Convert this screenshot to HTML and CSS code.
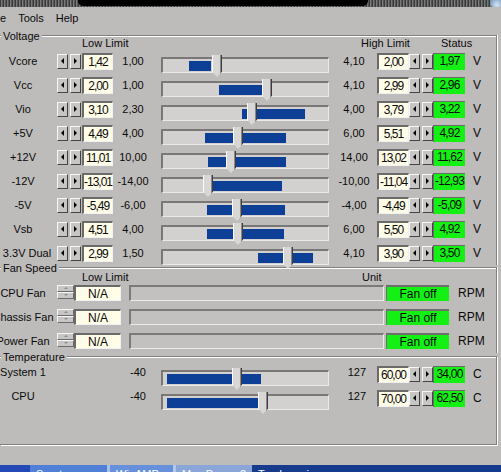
FILE: index.html
```html
<!DOCTYPE html>
<html lang="en">
<head>
  <meta charset="UTF-8" />
  <title>Hardware Monitor</title>
  <link rel="stylesheet" href="styles.css">
</head>
<body>
<div class="window">

  <div class="skin-top">
    <div class="skin-screen"></div>
    <span class="skin-knob"></span>
  </div>

  <div class="menubar">
    <span>e</span>
    <span>Tools</span>
    <span>Help</span>
  </div>

  <section class="group group-voltage">
    <div class="group-title">Voltage</div>
    <div class="vhead">
      <span>Low Limit</span>
      <span>High Limit</span>
      <span>Status</span>
    </div>

    <div class="vrow">
      <span class="name">Vcore</span>
      <span class="spin"><span class="arr arr-l"></span><span class="arr arr-r"></span></span>
      <span class="field">1,42</span>
      <span class="num">1,00</span>
      <div class="track"><div class="range" style="margin-left:26px;width:22px"></div><div class="thumb" style="left:49px"></div></div>
      <span class="num">4,10</span>
      <span class="field field-high">2,00</span>
      <span class="spin"><span class="arr arr-l"></span><span class="arr arr-r"></span></span>
      <span class="status">1,97</span>
      <span class="unit">V</span>
    </div>

    <div class="vrow">
      <span class="name">Vcc</span>
      <span class="spin"><span class="arr arr-l"></span><span class="arr arr-r"></span></span>
      <span class="field">2,00</span>
      <span class="num">1,00</span>
      <div class="track"><div class="range" style="margin-left:56px;width:43px"></div><div class="thumb" style="left:99px"></div></div>
      <span class="num">4,10</span>
      <span class="field field-high">2,99</span>
      <span class="spin"><span class="arr arr-l"></span><span class="arr arr-r"></span></span>
      <span class="status">2,96</span>
      <span class="unit">V</span>
    </div>

    <div class="vrow">
      <span class="name">Vio</span>
      <span class="spin"><span class="arr arr-l"></span><span class="arr arr-r"></span></span>
      <span class="field">3,10</span>
      <span class="num">2,30</span>
      <div class="track"><div class="range" style="margin-left:79px;width:63px"></div><div class="thumb" style="left:84px"></div></div>
      <span class="num">4,00</span>
      <span class="field field-high">3,79</span>
      <span class="spin"><span class="arr arr-l"></span><span class="arr arr-r"></span></span>
      <span class="status">3,22</span>
      <span class="unit">V</span>
    </div>

    <div class="vrow">
      <span class="name">+5V</span>
      <span class="spin"><span class="arr arr-l"></span><span class="arr arr-r"></span></span>
      <span class="field">4,49</span>
      <span class="num">4,00</span>
      <div class="track"><div class="range" style="margin-left:42px;width:81px"></div><div class="thumb" style="left:70px"></div></div>
      <span class="num">6,00</span>
      <span class="field field-high">5,51</span>
      <span class="spin"><span class="arr arr-l"></span><span class="arr arr-r"></span></span>
      <span class="status">4,92</span>
      <span class="unit">V</span>
    </div>

    <div class="vrow">
      <span class="name">+12V</span>
      <span class="spin"><span class="arr arr-l"></span><span class="arr arr-r"></span></span>
      <span class="field">11,01</span>
      <span class="num">10,00</span>
      <div class="track"><div class="range" style="margin-left:45px;width:78px"></div><div class="thumb" style="left:63px"></div></div>
      <span class="num">14,00</span>
      <span class="field field-high">13,02</span>
      <span class="spin"><span class="arr arr-l"></span><span class="arr arr-r"></span></span>
      <span class="status">11,62</span>
      <span class="unit">V</span>
    </div>

    <div class="vrow">
      <span class="name">-12V</span>
      <span class="spin"><span class="arr arr-l"></span><span class="arr arr-r"></span></span>
      <span class="field">-13,01</span>
      <span class="num">-14,00</span>
      <div class="track"><div class="range" style="margin-left:50px;width:69px"></div><div class="thumb" style="left:40px"></div></div>
      <span class="num">-10,00</span>
      <span class="field field-high">-11,04</span>
      <span class="spin"><span class="arr arr-l"></span><span class="arr arr-r"></span></span>
      <span class="status">-12,93</span>
      <span class="unit">V</span>
    </div>

    <div class="vrow">
      <span class="name">-5V</span>
      <span class="spin"><span class="arr arr-l"></span><span class="arr arr-r"></span></span>
      <span class="field">-5,49</span>
      <span class="num">-6,00</span>
      <div class="track"><div class="range" style="margin-left:44px;width:78px"></div><div class="thumb" style="left:69px"></div></div>
      <span class="num">-4,00</span>
      <span class="field field-high">-4,49</span>
      <span class="spin"><span class="arr arr-l"></span><span class="arr arr-r"></span></span>
      <span class="status">-5,09</span>
      <span class="unit">V</span>
    </div>

    <div class="vrow">
      <span class="name">Vsb</span>
      <span class="spin"><span class="arr arr-l"></span><span class="arr arr-r"></span></span>
      <span class="field">4,51</span>
      <span class="num">4,00</span>
      <div class="track"><div class="range" style="margin-left:44px;width:77px"></div><div class="thumb" style="left:70px"></div></div>
      <span class="num">6,00</span>
      <span class="field field-high">5,50</span>
      <span class="spin"><span class="arr arr-l"></span><span class="arr arr-r"></span></span>
      <span class="status">4,92</span>
      <span class="unit">V</span>
    </div>

    <div class="vrow">
      <span class="name name-wide">3.3V Dual</span>
      <span class="spin"><span class="arr arr-l"></span><span class="arr arr-r"></span></span>
      <span class="field">2,99</span>
      <span class="num">1,50</span>
      <div class="track"><div class="range" style="margin-left:95px;width:55px"></div><div class="thumb" style="left:120px"></div></div>
      <span class="num">4,10</span>
      <span class="field field-high">3,90</span>
      <span class="spin"><span class="arr arr-l"></span><span class="arr arr-r"></span></span>
      <span class="status">3,50</span>
      <span class="unit">V</span>
    </div>
  </section>

  <section class="group group-fan">
    <div class="group-title">Fan Speed</div>
    <div class="fhead">
      <span>Low Limit</span>
      <span>Unit</span>
    </div>

    <div class="frow">
      <span class="name">CPU Fan</span>
      <span class="vspin"><span class="varr varr-up"></span><span class="varr varr-down"></span></span>
      <span class="field field-na">N/A</span>
      <span class="fanbar"></span>
      <span class="fanstat">Fan off</span>
      <span class="unit-rpm">RPM</span>
    </div>

    <div class="frow">
      <span class="name">Chassis Fan</span>
      <span class="vspin"><span class="varr varr-up"></span><span class="varr varr-down"></span></span>
      <span class="field field-na">N/A</span>
      <span class="fanbar"></span>
      <span class="fanstat">Fan off</span>
      <span class="unit-rpm">RPM</span>
    </div>

    <div class="frow">
      <span class="name">Power Fan</span>
      <span class="vspin"><span class="varr varr-up"></span><span class="varr varr-down"></span></span>
      <span class="field field-na">N/A</span>
      <span class="fanbar"></span>
      <span class="fanstat">Fan off</span>
      <span class="unit-rpm">RPM</span>
    </div>
  </section>

  <section class="group group-temp">
    <div class="group-title">Temperature</div>

    <div class="vrow trow">
      <span class="name">System 1</span>
      <span></span>
      <span></span>
      <span class="num num-r">-40</span>
      <div class="track"><div class="range" style="margin-left:4px;width:94px"></div><div class="thumb" style="left:69px"></div></div>
      <span class="num num-r">127</span>
      <span class="field field-high">60,00</span>
      <span class="spin"><span class="arr arr-l"></span><span class="arr arr-r"></span></span>
      <span class="status">34,00</span>
      <span class="unit">C</span>
    </div>

    <div class="vrow trow">
      <span class="name">CPU</span>
      <span></span>
      <span></span>
      <span class="num num-r">-40</span>
      <div class="track"><div class="range" style="margin-left:4px;width:95px"></div><div class="thumb" style="left:95px"></div></div>
      <span class="num num-r">127</span>
      <span class="field field-high">70,00</span>
      <span class="spin"><span class="arr arr-l"></span><span class="arr arr-r"></span></span>
      <span class="status">62,50</span>
      <span class="unit">C</span>
    </div>
  </section>

  <div class="taskbar">
    <span class="task task-start"></span>
    <span class="task task-a">Sportcup.ro</span>
    <span class="task task-b">WinAMP</span>
    <span class="task task-c">Max Payne 2</span>
    <span class="task task-active">Trackmania</span>
  </div>

</div>
</body>
</html>
```

FILE: styles.css
```css
:root {
  --face: #bebcba;
  --shade: #82807e;
  --dark: #6c6a68;
  --light: #f2f2f2;
  --cream: #fffde8;
  --green: #14f014;
  --blue: #0d3f96;
}

body {
  margin: 0;
  width: 501px;
  height: 472px;
  overflow: hidden;
  background: var(--face);
  font-family: "Liberation Sans", Arial, sans-serif;
  font-size: 11px;
  color: #0a0a0a;
}

.window {
  display: flex;
  flex-direction: column;
  height: 472px;
}

/* skin strip along the top */
.skin-top {
  height: 7px;
  display: flex;
  overflow: hidden;
  background: repeating-linear-gradient(90deg, #3a3a3a 0 1px, #7a7a7a 1px 2px, #575757 2px 3px);
}

.skin-screen {
  margin-left: 78px;
  width: 290px;
  height: 6px;
  background: #000;
  border-radius: 0 0 5px 5px;
}

.skin-knob {
  margin-left: auto;
  margin-top: -5px;
  margin-right: -3px;
  width: 14px;
  height: 14px;
  border-radius: 50%;
  background: radial-gradient(circle at 50% 70%, #d8e6f2, #3f6fa6);
}

/* menu */
.menubar {
  height: 22px;
  display: flex;
  align-items: center;
  gap: 12px;
}

/* group boxes */
.group {
  width: 497px;
  box-sizing: border-box;
  border-top: 1px solid var(--shade);
  border-right: 1px solid var(--shade);
  box-shadow: inset 0 1px #fff, 1px 0 #fff;
}

.group-title {
  width: fit-content;
  margin: -6px 0 0 1px;
  padding: 0 2px;
  line-height: 12px;
  background: var(--face);
}

.group-voltage {
  margin-top: 6px;
}

.group-fan {
  margin-top: 2px;
}

.group-temp {
  margin-top: 3px;
  padding-bottom: 34px;
  border-bottom: 1px solid var(--shade);
  box-shadow: inset 0 1px #fff, 1px 1px #fff;
}

.group-temp .group-title {
  margin-bottom: -1px;
}

/* headers */
.vhead {
  margin-top: -4px;
  height: 11px;
  line-height: 11px;
  padding-left: 82px;
  display: grid;
  grid-template-columns: 279px 80px 1fr;
  white-space: nowrap;
}

.fhead {
  margin-top: -3px;
  height: 10px;
  line-height: 12px;
  padding-left: 82px;
  display: grid;
  grid-template-columns: 280px 1fr;
}

/* voltage / temperature rows */
.vrow {
  display: grid;
  grid-template-columns: 57px 24px 33px 38px 184px 36px 37px 24px 32px 1fr;
  height: 24px;
  align-items: center;
}

.name {
  display: flex;
  justify-content: center;
  padding-right: 11px;
  white-space: nowrap;
}

.name-wide {
  padding: 0 5px 0 2px;
}

.num {
  text-align: center;
  white-space: nowrap;
}

.num-r {
  text-align: right;
  padding-right: 6px;
}

.trow .name,
.trow .num {
  padding-bottom: 4px;
}

.spin {
  display: flex;
  gap: 2px;
}

.arr {
  width: 11px;
  height: 15px;
  box-sizing: border-box;
  background: #c8c6c4;
  border: 1px solid;
  border-color: #f6f6f6 #444 #444 #f6f6f6;
  display: flex;
  align-items: center;
  justify-content: center;
}

.arr::before {
  content: "";
  border-top: 3px solid transparent;
  border-bottom: 3px solid transparent;
}

.arr-l::before {
  border-right: 3px solid #000;
}

.arr-r::before {
  border-left: 3px solid #000;
}

.field {
  height: 17px;
  box-sizing: border-box;
  margin: 0 1px;
  display: flex;
  justify-content: center;
  background: var(--cream);
  border-style: solid;
  border-width: 2px 1px 1px 2px;
  border-color: var(--dark) var(--light) var(--light) var(--dark);
  font-size: 12px;
  letter-spacing: -1px;
  line-height: 14px;
  white-space: nowrap;
}

.field-high {
  margin: 0 0 0 5px;
}

.track {
  align-self: end;
  position: relative;
  margin-left: 9px;
  width: 168px;
  height: 16px;
  box-sizing: border-box;
  border-style: solid;
  border-width: 2px 1px 1px 2px;
  border-color: #7a7876 #ecebea #ecebea #7a7876;
  background: #d3d1cf;
}

.range {
  margin-top: 2px;
  height: 10px;
  background: var(--blue);
}

.thumb {
  position: absolute;
  top: -4px;
  width: 10px;
  height: 22px;
  background: linear-gradient(90deg, #fafafa 0 1px, #d9d7d5 1px 8px, #8a8886 8px 9px, #3e3e3e 9px);
  clip-path: polygon(0 0, 100% 0, 100% 76%, 50% 100%, 0 76%);
}

.status {
  height: 17px;
  box-sizing: border-box;
  display: flex;
  justify-content: center;
  background: var(--green);
  border-top: 1px solid #6a6a6a;
  border-left: 1px solid #6a6a6a;
  font-size: 12px;
  letter-spacing: -0.8px;
  line-height: 15px;
  white-space: nowrap;
}

.unit {
  padding-left: 8px;
  font-size: 12px;
}

/* fan rows */
.frow {
  display: grid;
  grid-template-columns: 57px 17px 47px 263px 65px 1fr;
  height: 24px;
  align-items: center;
}

.vspin {
  display: flex;
  flex-direction: column;
  margin-bottom: 3px;
}

.varr {
  height: 7px;
  box-sizing: border-box;
  background: #c8c6c4;
  border: 1px solid;
  border-color: #f6f6f6 #6a6a6a #6a6a6a #f6f6f6;
  display: flex;
  align-items: center;
  justify-content: center;
}

.varr::before {
  content: "";
  border-left: 2px solid transparent;
  border-right: 2px solid transparent;
}

.varr-up::before {
  border-bottom: 2px solid #8e8e8e;
}

.varr-down::before {
  border-top: 2px solid #8e8e8e;
}

.field-na {
  margin: 0;
  height: 16px;
  letter-spacing: 0;
}

.fanbar {
  margin-left: 8px;
  height: 16px;
  box-sizing: border-box;
  border-style: solid;
  border-width: 2px 1px 1px 2px;
  border-color: #7c7a78 #ecebea #ecebea #7c7a78;
  background: #c3c1bf;
}

.fanstat {
  margin-left: 2px;
  height: 16px;
  box-sizing: border-box;
  background: var(--green);
  border-top: 2px solid #6e6e6e;
  border-left: 1px solid #6e6e6e;
  font-size: 12px;
  line-height: 14px;
  text-align: center;
}

.unit-rpm {
  padding-left: 9px;
  font-size: 12px;
}

/* taskbar peeking in at the bottom */
.taskbar {
  margin-top: auto;
  height: 7px;
  display: flex;
  overflow: hidden;
  background: #143a8e;
  color: #fff;
  font-size: 11px;
  line-height: 12px;
}

.task {
  padding: 3px 0 0 6px;
  box-sizing: border-box;
  white-space: nowrap;
}

.task-start {
  width: 30px;
  background: #2449b6;
}

.task-a {
  width: 80px;
  background: #4f7fd6;
  border-right: 3px solid #a9c0e8;
}

.task-b {
  width: 66px;
  background: #6690dc;
  border-right: 3px solid #b6c8ea;
}

.task-c {
  width: 76px;
  background: #8aa6d8;
}

.task-active {
  width: 68px;
  background: #163b8c;
}
```
